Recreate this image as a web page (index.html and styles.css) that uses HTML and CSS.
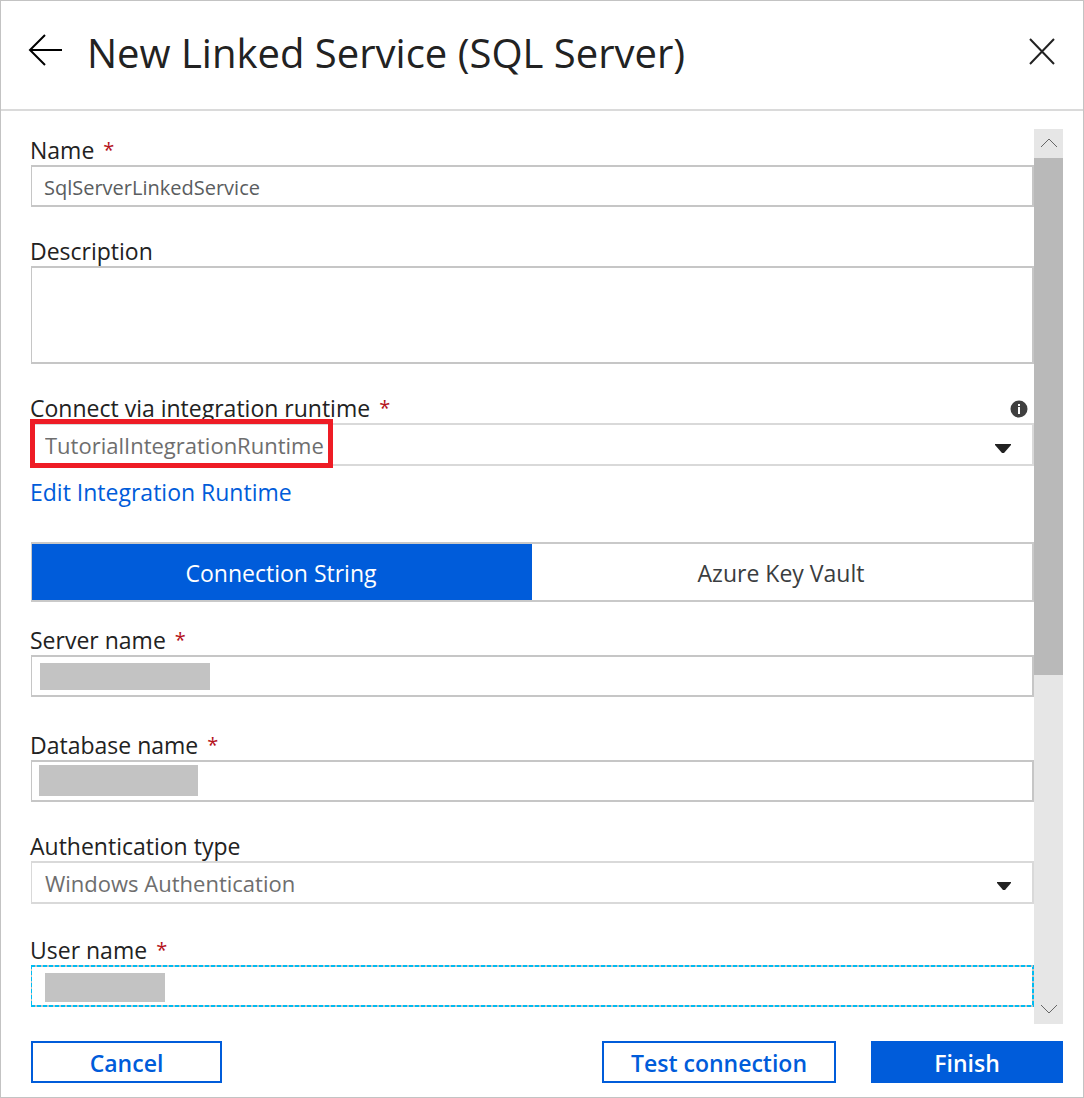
FILE: index.html
```html
<!DOCTYPE html>
<html lang="en">
<head>
<meta charset="utf-8">
<meta name="viewport" content="width=device-width, initial-scale=1">
<title>New Linked Service (SQL Server)</title>
<link rel="stylesheet" href="styles.css">
</head>
<body>
<main class="panel">
  <header class="panel-header">
    <button class="icon-button" type="button" aria-label="Back">
      <svg width="36" height="34" viewBox="0 0 36 34" fill="none" stroke="#000" stroke-width="2"><path d="M35 16H3M18 1L3 16L18 31"/></svg>
    </button>
    <h1 class="panel-title">New Linked Service (SQL Server)</h1>
    <button class="icon-button" type="button" aria-label="Close">
      <svg width="28" height="28" viewBox="0 0 28 28" fill="none" stroke="#222" stroke-width="2"><path d="M2 2L26 27M26 2L2 27"/></svg>
    </button>
  </header>

  <div class="panel-body">
    <form class="form" id="service-form">
      <div class="field">
        <div class="label-row"><label for="name">Name</label><span class="required">*</span></div>
        <input class="control" id="name" type="text" value="SqlServerLinkedService">
      </div>

      <div class="field">
        <div class="label-row"><label for="description">Description</label></div>
        <textarea class="control control-multiline" id="description"></textarea>
      </div>

      <div class="field">
        <div class="label-row">
          <label for="runtime">Connect via integration runtime</label><span class="required">*</span>
          <svg class="info" width="18" height="18" viewBox="0 0 18 18"><circle cx="9" cy="9" r="8.500" fill="#3f3f3f"/><path d="M8 4h2v2H8zM8 7h2v7H8z" fill="#fff"/></svg>
        </div>
        <div class="control-wrap">
          <select class="control control-select" id="runtime"><option>TutorialIntegrationRuntime</option></select>
          <svg class="caret" width="16" height="9" viewBox="0 0 16 9"><path d="M0 0H16V1L9 9H7L0 1Z" fill="#222"/></svg>
          <span class="highlight"></span>
        </div>
        <a class="edit-link" href="#runtime">Edit Integration Runtime</a>
      </div>

      <div class="tabs" role="tablist">
        <button class="tab tab-active" type="button" role="tab" aria-selected="true">Connection String</button>
        <button class="tab" type="button" role="tab" aria-selected="false">Azure Key Vault</button>
      </div>

      <div class="field field-server">
        <div class="label-row"><label for="server">Server name</label><span class="required">*</span></div>
        <div class="control-wrap">
          <input class="control" id="server" type="text">
          <span class="mask mask-server"></span>
        </div>
      </div>

      <div class="field">
        <div class="label-row"><label for="database">Database name</label><span class="required">*</span></div>
        <div class="control-wrap">
          <input class="control" id="database" type="text">
          <span class="mask mask-database"></span>
        </div>
      </div>

      <div class="field field-auth">
        <div class="label-row"><label for="auth">Authentication type</label></div>
        <div class="control-wrap">
          <select class="control control-select" id="auth"><option>Windows Authentication</option></select>
          <svg class="caret" width="14" height="8" viewBox="0 0 14 8"><path d="M0 0H14V1L8 8H6L0 1Z" fill="#222"/></svg>
        </div>
      </div>

      <div class="field">
        <div class="label-row"><label for="user">User name</label><span class="required">*</span></div>
        <div class="control-wrap">
          <input class="control control-focus" id="user" type="text">
          <span class="mask mask-user"></span>
        </div>
      </div>
    </form>

    <div class="scrollbar" aria-hidden="true">
      <div class="scroll-arrow"><svg width="18" height="10" viewBox="0 0 18 10" fill="none" stroke="#666"><path d="M1 9L9 1L17 9"/></svg></div>
      <div class="scroll-track"><div class="scroll-thumb"></div></div>
      <div class="scroll-arrow"><svg width="18" height="10" viewBox="0 0 18 10" fill="none" stroke="#666"><path d="M1 1L9 9L17 1"/></svg></div>
    </div>
  </div>

  <footer class="panel-footer">
    <button class="button button-cancel" type="button">Cancel</button>
    <button class="button button-test" type="button">Test connection</button>
    <button class="button button-primary" type="submit" form="service-form">Finish</button>
  </footer>
</main>
</body>
</html>
```
FILE: styles.css
```css
* {
  box-sizing: border-box;
}

body {
  margin: 0;
  background: #fff;
  color: #222;
  font-family: "Segoe UI", "Open Sans", "Noto Sans", sans-serif;
  font-size: 23px;
  line-height: 32px;
}

button,
input,
select,
textarea {
  margin: 0;
  font: inherit;
  border-radius: 0;
  outline: none;
}

.panel {
  display: flex;
  flex-direction: column;
  min-height: 100vh;
  border: 1px solid #c3c3c3;
}

.panel-header {
  display: flex;
  align-items: center;
  padding: 0 27px 8px 26px;
  height: 110px;
  border-bottom: 2px solid #dadada;
}

.icon-button {
  display: flex;
  padding: 0;
  border: 0;
  background: none;
}

.panel-title {
  flex: 1;
  margin: 0 0 0 24px;
  padding-top: 4px;
  font-size: 40px;
  font-weight: 400;
  line-height: 56px;
}

.panel-body {
  display: flex;
  flex: 1;
  padding: 18px 20px 0 30px;
}

.form {
  flex: 1;
  display: flex;
  flex-direction: column;
  gap: 27px;
  min-width: 0;
  padding: 4px 0 16px;
}

.label-row {
  display: flex;
  align-items: center;
  height: 32px;
  margin-left: -1px;
  padding-top: 2px;
}

.required {
  margin-left: 9px;
  color: #b5121b;
  font-size: 20px;
}

.info {
  margin: 2px 6px 0 auto;
}

.control-wrap {
  position: relative;
}

.control {
  display: block;
  width: 100%;
  height: 42px;
  padding: 2px 12px 0;
  border: 2px solid #c6c6c6;
  border-left-width: 1px;
  background: #fff;
  color: #5a5d60;
  font-size: 20px;
}

.control-multiline {
  height: 98px;
  resize: none;
}

.control-select {
  height: 43px;
  padding: 0 13px;
  border-color: #d9d9d9;
  color: #6e6e6e;
  font-size: 22px;
  appearance: none;
}

.control-focus {
  border-color: transparent;
  background:
    repeating-linear-gradient(90deg, #00bcf2 0 4px, #c3c3c3 4px 6px) top / 100% 2px no-repeat border-box,
    repeating-linear-gradient(90deg, #00bcf2 0 4px, #c3c3c3 4px 6px) bottom / 100% 2px no-repeat border-box,
    repeating-linear-gradient(#00bcf2 0 4px, #c3c3c3 4px 6px) left / 1px 100% no-repeat border-box,
    repeating-linear-gradient(#00bcf2 0 4px, #c3c3c3 4px 6px) right / 2px 100% no-repeat border-box,
    #fff;
}

.caret {
  position: absolute;
  top: 21px;
  right: 23px;
}

.highlight {
  position: absolute;
  top: -4px;
  left: -1px;
  width: 303px;
  height: 49px;
  border: 5px solid #ee1c25;
  pointer-events: none;
}

.edit-link {
  display: block;
  width: fit-content;
  margin: 10px 0 7px -1px;
  color: #005cda;
  text-decoration: none;
}

.tabs {
  display: flex;
  height: 60px;
  border: 2px solid #c9c9c9;
  border-left-width: 1px;
}

.tab {
  flex: 1;
  padding: 2px 2px 0 0;
  border: 0;
  background: #fff;
  color: #3a3d40;
}

.tab-active {
  background: #005cda;
  color: #fff;
}

.field-server {
  margin: -6px 0 4px;
}

.field-auth {
  margin-bottom: 2px;
}

.mask {
  position: absolute;
  background: #c3c3c3;
}

.mask-server {
  top: 8px;
  left: 9px;
  width: 170px;
  height: 27px;
}

.mask-database {
  top: 5px;
  left: 8px;
  width: 159px;
  height: 31px;
}

.mask-user {
  top: 8px;
  left: 14px;
  width: 120px;
  height: 29px;
}

.scrollbar {
  display: flex;
  flex-direction: column;
  width: 29px;
  background: #e6e6e6;
}

.scroll-arrow {
  display: flex;
  align-items: center;
  justify-content: center;
  height: 29px;
  padding-bottom: 2px;
}

.scroll-track {
  flex: 1;
}

.scroll-thumb {
  height: 517px;
  background: #b9b9b9;
}

.panel-footer {
  display: flex;
  padding: 17px 20px 14px 30px;
}

.button {
  height: 42px;
  padding: 2px 0 0;
  border: 2px solid #005cda;
  background: #fff;
  color: #005cda;
  font-weight: 600;
}

.button-cancel {
  width: 191px;
  margin-right: auto;
}

.button-test {
  width: 234px;
  margin-right: 35px;
}

.button-primary {
  width: 192px;
  background: #005cda;
  color: #fff;
}
```
